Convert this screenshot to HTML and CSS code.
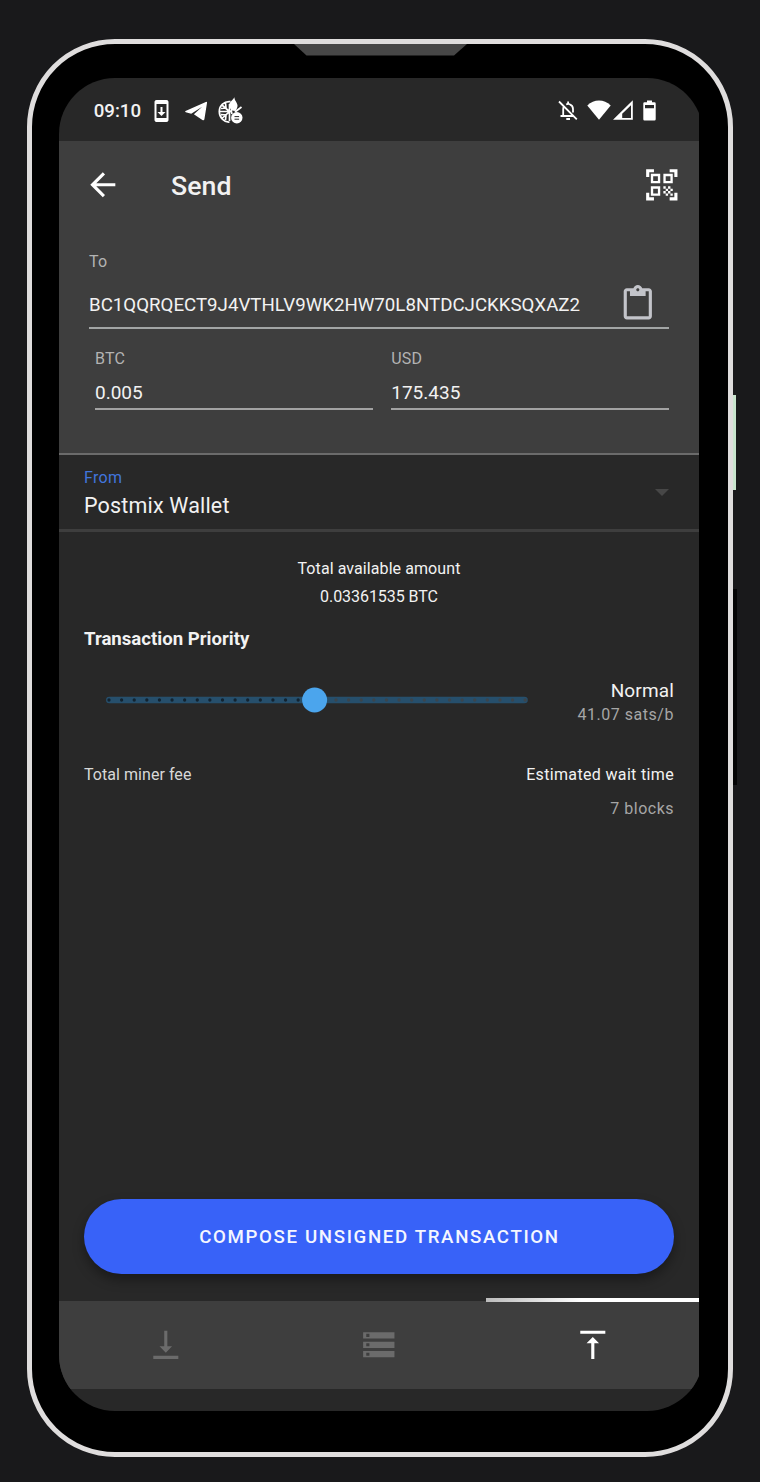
FILE: index.html
```html
<!DOCTYPE html>
<html lang="en">
<head>
<meta charset="utf-8">
<title>Send</title>
<link rel="stylesheet" href="styles.css">
</head>
<body>
<div class="phone">
  <span class="notch"></span>
  <span class="side-button power"></span>
  <span class="side-button volume"></span>
  <div class="viewport">
  <main class="screen">
    <div class="status-bar">
      <div class="status-left">
        <span class="clock">09:10</span>
        <svg class="i-update" viewBox="0 0 24 24"><path d="M17 1H7c-1.100 0-2 .9-2 2v18c0 1.100.9 2 2 2h10c1.100 0 2-.9 2-2V3c0-1.100-.9-2-2-2zm0 18H7V5h10v14zm-1-6h-3V8h-2v5H8l4 4 4-4z"/></svg>
        <svg class="i-telegram" viewBox="0 0 22 20"><path d="M.5 10 20.800.900Q22.200.500 22 2L19.400 18.200Q19 19.900 17.400 19L11.800 15.200 8.900 13.200 17.200 5.800 6.200 12.700.800 11.300Q-.4 10.700.5 10z"/></svg>
        <svg class="i-globe" viewBox="0 0 25 27"><path class="ln" d="M12.500 4.700C6 4 1.300 8.500 1.300 14.500S6 25.500 11.500 25M11.500 7v17M1.500 14.500H13M4.500 8.500l7 6L4.500 21M7.500 6l.5 5-5 .5M3 17.500l5 .5-.5 5"/><path d="M16.500.3c-.2 3.200 2.700 5 3 8 .2 2.200-1 4-2 5.700l-4-.5-2.500-4c-.3-4 2.500-5 5.500-9.200z"/><path class="ln" d="m17 15 6.500-5M14 17l-1-4"/><circle cx="18.800" cy="20.800" r="5.700"/><path class="cut" d="M16.500 19.600h4.600M16.500 22.200h4.600"/></svg>
      </div>
      <div class="status-right">
        <svg class="i-bell" viewBox="0 0 20 21"><path d="M1 1.500 18.800 19.300M2.500 16H15.500M5.200 16V9Q5.200 7.500 6 6.200M8.200 4.500Q10 3.500 11.800 4.300 15 5.500 15 9V12.500"/><path d="M10.100 1.500V4M8.300 19H12"/></svg>
        <svg class="i-wifi" viewBox="0 0 24 20"><path d="M12 19.800.3 5.500Q5.500.5 12 .5T23.700 5.500z"/></svg>
        <svg class="i-signal" viewBox="0 0 20 20"><path d="M0 19.800 19.800.3V19.800zM9.200 18H18V5.200L9.200 13.800z"/></svg>
        <svg class="i-battery" viewBox="0 0 13 21"><path d="M4 .5H9V2.300H11.500Q12.700 2.300 12.700 3.500V19.300Q12.700 20.500 11.500 20.500H1.500Q.3 20.500.3 19.300V3.500Q.3 2.300 1.500 2.300H4zM2 5V8.200H11V5z"/></svg>
      </div>
    </div>

    <header class="send-panel">
      <div class="toolbar">
        <svg class="icon" viewBox="0 0 24 24"><path d="M20 11H7.830l5.590-5.590L12 4l-8 8 8 8 1.410-1.410L7.830 13H20v-2z"/></svg>
        <h1>Send</h1>
        <svg class="icon" viewBox="0 0 24 24"><path d="M9.500 6.500v3h-3v-3h3M11 5H5v6h6V5zM9.500 14.500v3h-3v-3h3M11 13H5v6h6v-6zM17.500 6.500v3h-3v-3h3M19 5h-6v6h6V5zM13 13h1.500v1.500H13zM14.500 14.500H16V16h-1.500zM16 13h1.500v1.500H16zM13 16h1.500v1.500H13zM14.500 17.500H16V19h-1.500zM16 16h1.500v1.500H16zM17.500 14.500H19V16h-1.500zM17.500 17.500H19V19h-1.500zM22 7h-2V4h-3V2h5v5zM22 22v-5h-2v3h-3v2h5zM2 22h5v-2H4v-3H2v5zM2 2v5h2V4h3V2H2z"/></svg>
      </div>
      <div class="to-field">
        <label>To</label>
        <div class="to-row">
          <span class="address">BC1QQRQECT9J4VTHLV9WK2HW70L8NTDCJCKKSQXAZ2</span>
          <svg class="icon clip" viewBox="0 0 24 24"><path d="M19 2h-4.180C14.400.84 13.300 0 12 0S9.600.84 9.180 2H5c-1.100 0-2 .9-2 2v16c0 1.100.9 2 2 2h14c1.100 0 2-.9 2-2V4c0-1.100-.9-2-2-2zm-7 0c.55 0 1 .45 1 1s-.45 1-1 1-1-.45-1-1 .45-1 1-1zm7 18H5V4h2v3h10V4h2v16z"/></svg>
        </div>
      </div>
      <div class="amounts">
        <div class="amount"><label>BTC</label><span>0.005</span></div>
        <div class="amount"><label>USD</label><span>175.435</span></div>
      </div>
    </header>

    <section class="from">
      <div class="from-text">
        <span class="from-label">From</span>
        <span class="from-value">Postmix Wallet</span>
      </div>
      <span class="caret"></span>
    </section>

    <section class="details">
      <div class="available">
        <span>Total available amount</span>
        <span class="balance">0.03361535 BTC</span>
      </div>
      <h2>Transaction Priority</h2>
      <div class="priority">
        <svg class="slider" viewBox="0 0 424 26">
          <path class="track" d="M4.300 13H419.500"/>
          <path class="tick past" d="M4 13H196"/>
          <path class="tick" d="M218.400 13H420.500"/>
          <circle cx="209.600" cy="13" r="12.500"/>
        </svg>
        <div class="rate">
          <span class="speed">Normal</span>
          <span class="sats">41.07 sats/b</span>
        </div>
      </div>
      <div class="summary">
        <span class="miner">Total miner fee</span>
        <div class="wait"><span class="wait-label">Estimated wait time</span><span class="blocks">7 blocks</span></div>
      </div>
      <button class="compose">COMPOSE UNSIGNED TRANSACTION</button>
    </section>

    <nav class="tabs">
      <span class="tab"><svg class="icon" viewBox="0 0 24 24"><path d="M16 13h-3V3h-2v10H8l4 4 4-4zM4 19v2h16v-2H4z"/></svg></span>
      <span class="tab"><svg class="icon" viewBox="0 0 24 24"><path d="M2 20h20v-4H2v4zm2-3h2v2H4v-2zM2 4v4h20V4H2zm4 3H4V5h2v2zm-4 7h20v-4H2v4zm2-3h2v2H4v-2z"/></svg></span>
      <span class="tab active"><svg class="icon" viewBox="0 0 24 24"><path d="M8 11h3v10h2V11h3l-4-4-4 4zM4 3v2h16V3H4z"/></svg></span>
    </nav>
  </main>
  </div>
</div>
</body>
</html>
```
FILE: styles.css
```css
* { box-sizing: border-box; }
body {
  margin: 0;
  height: 1482px;
  padding: 39px 0 0 27px;
  background: #19191b;
  font-family: Roboto, sans-serif;
  color: #f2f2f2;
  overflow: hidden;
}
svg { display: block; fill: #fff; flex: none; }
label, h1, h2 { display: block; margin: 0; }
span { white-space: nowrap; }

.phone {
  position: relative;
  width: 706px;
  height: 1418px;
  padding: 34px 0 0 27px;
  border: 5px solid #dfdddd;
  border-radius: 88px;
  background: #000;
}
.notch {
  position: absolute;
  left: 262px;
  top: 0;
  width: 173px;
  height: 11.500px;
  background: #474747;
  clip-path: polygon(0 0, 100% 0, 160px 100%, 12.500px 100%);
}
.side-button { position: absolute; left: 701px; width: 3px; }
.power { top: 351px; height: 95px; background: #c9e5ce; }
.volume { top: 545px; height: 196px; width: 4px; background: #040405; }

.viewport { width: 640px; height: 1332.500px; overflow: hidden; }
.screen {
  display: flex;
  flex-direction: column;
  width: 643.500px;
  height: 1332.500px;
  border-radius: 56px;
  background: #282828;
  overflow: hidden;
}
.screen > * { width: 640px; flex: none; }

.status-bar {
  display: flex;
  justify-content: space-between;
  height: 63px;
  padding: 0 43.500px 0 34.800px;
}
.status-left, .status-right { display: flex; align-items: center; height: 65px; }
.status-right { height: 64px; }
.clock { width: 53.200px; font-size: 18.700px; font-weight: 500; letter-spacing: -.050px; }
.i-update { width: 29px; height: 24px; }
.i-telegram { width: 22px; height: 20px; margin-left: 9px; }
.i-globe { width: 25px; height: 27px; margin-left: 11px; }
.i-globe .ln { fill: none; stroke: #fff; stroke-width: 1.700; }
.i-globe .cut { fill: none; stroke: #282828; stroke-width: 1; }
.i-bell { width: 20px; height: 21px; fill: none; stroke: #fff; stroke-width: 1.800; }
.i-wifi { width: 24px; height: 20px; margin-left: 9px; }
.i-signal { width: 20px; height: 20px; margin-left: 2px; }
.i-battery { width: 13px; height: 21px; margin-left: 10px; }
.i-signal, .i-battery { fill-rule: evenodd; }

.icon { width: 37.600px; height: 37.600px; }

.send-panel { height: 314px; background: #3e3e3e; border-bottom: 2px solid #6b6b6b; }
.toolbar {
  display: flex;
  align-items: center;
  height: 88px;
  padding: 0 18.500px 0 25px;
}
h1 { flex: 1; margin-left: 49.500px; font-size: 26.700px; font-weight: 500; line-height: 30px; padding-top: 2px; }
label { font-size: 16px; line-height: 20px; color: #b3b3b3; letter-spacing: .2px; }
.to-field { height: 78px; margin: 22px 30px 0; padding-top: 1px; border-bottom: 2px solid #a2a5a5; }
.to-row { display: flex; justify-content: space-between; padding: 13px 12px 0 0; }
.address { padding-top: 1.500px; font-size: 18.700px; line-height: 37px; }
.clip { fill: #c3c4ca; }
.amounts { display: flex; gap: 18.500px; padding: 20px 30px 0 36px; }
.amount { flex: 1; height: 61px; border-bottom: 2px solid #a2a2a2; }
.amount span { display: block; margin-top: 11px; font-size: 19px; line-height: 26px; }

.from {
  display: flex;
  justify-content: space-between;
  align-items: center;
  height: 77px;
  padding: 0 30px 0 25px;
  border-bottom: 3px solid #3e3e3e;
}
.from-text { display: flex; flex-direction: column; padding-top: 5px; }
.from-label { color: #4175dc; font-size: 16px; line-height: 22px; letter-spacing: .350px; }
.from-value { font-size: 21.500px; line-height: 33px; letter-spacing: .170px; }
.caret { margin-top: 1px; border: 7.500px solid transparent; border-top-color: #474747; border-bottom: 0; }

.details { display: flex; flex-direction: column; height: 769px; padding: 23px 25px 0; }
.available { display: flex; flex-direction: column; align-items: center; font-size: 16px; line-height: 28px; letter-spacing: .080px; }
.balance { letter-spacing: -.050px; }
h2 { margin-top: 15px; font-size: 18.600px; line-height: 26px; font-weight: 700; }
.priority { display: flex; justify-content: space-between; align-items: center; margin-top: 23px; padding-left: 21px; height: 52px; }
.slider { width: 424px; height: 26px; margin-top: -2px; }
.slider circle { fill: #4ba5ed; }
.track { stroke: #264f6c; stroke-width: 6.500; stroke-linecap: round; }
.tick { stroke: #3b454d; stroke-width: 3.300; stroke-linecap: round; stroke-dasharray: 0 12.610; }
.past { stroke: #122330; stroke-width: 3.300; }
.rate { display: flex; flex-direction: column; align-items: flex-end; padding-top: 3px; line-height: 24px; }
.speed { font-size: 19px; letter-spacing: .150px; }
.sats { font-size: 16px; letter-spacing: .520px; color: #a6a6a6; }
.summary { display: flex; justify-content: space-between; margin-top: 36px; font-size: 16px; line-height: 24px; }
.miner { color: #d8d8d8; letter-spacing: .050px; }
.wait { display: flex; flex-direction: column; align-items: flex-end; gap: 10px; }
.wait-label { letter-spacing: .340px; }
.blocks { color: #a6a6a6; letter-spacing: .500px; }
.compose {
  flex: none;
  height: 74.500px;
  margin-top: auto;
  margin-bottom: 27.500px;
  padding: 2px 0 0 1px;
  border: 0;
  border-radius: 38px;
  background: #3862f8;
  color: #f4f6ff;
  font: 500 18.700px Roboto, sans-serif;
  letter-spacing: 1.630px;
  box-shadow: 0 6px 12px rgba(0, 0, 0, .35);
}

.tabs { display: flex; height: 87.500px; padding-top: 1px; background: #3e3e3e; }
.tab { position: relative; flex: 1; display: flex; align-items: center; justify-content: center; }
.tab .icon { fill: #6b6b6b; }
.active .icon { fill: #fff; }
.active::before {
  content: "";
  position: absolute;
  left: 0;
  right: 0;
  top: -4px;
  height: 4px;
  background: linear-gradient(90deg, #bbb, #fff 45%);
}
```
